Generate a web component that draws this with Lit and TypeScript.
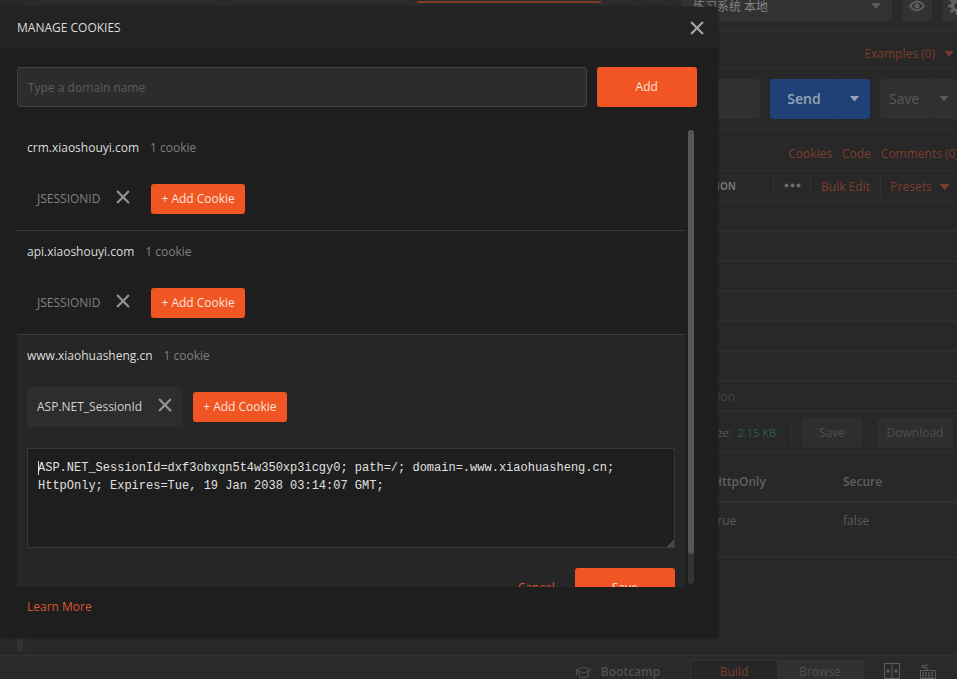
import { LitElement, html, css, svg, nothing } from "lit";
import { customElement, property, state } from "lit/decorators.js";
import { classMap } from "lit/directives/class-map.js";

interface CookieDomain {
  domain: string;
  cookies: string[];
  value?: string;
}

const DOMAINS: CookieDomain[] = [
  { domain: "crm.xiaoshouyi.com", cookies: ["JSESSIONID"] },
  { domain: "api.xiaoshouyi.com", cookies: ["JSESSIONID"] },
  {
    domain: "www.xiaohuasheng.cn",
    cookies: ["ASP.NET_SessionId"],
    value:
      "ASP.NET_SessionId=dxf3obxgn5t4w350xp3icgy0; path=/; domain=.www.xiaohuasheng.cn; HttpOnly; Expires=Tue, 19 Jan 2038 03:14:07 GMT;",
  },
];

const controls = css`
  * {
    box-sizing: border-box;
  }
  button,
  input,
  select,
  textarea {
    margin: 0;
    padding: 0;
    border: 0;
    background: none;
    color: inherit;
    font: inherit;
    outline: none;
  }
  a {
    text-decoration: none;
  }
  svg {
    display: block;
  }
`;

const cross = svg`<path d="M1 1 L12 12 M12 1 L1 12" fill="none" stroke="currentColor" stroke-width="2"/>`;

@customElement("cookie-manager")
export class CookieManager extends LitElement {
  @property({ attribute: false }) domains: CookieDomain[] = [];

  static styles = [
    controls,
    css`
      :host {
        display: flex;
        flex-direction: column;
        overflow: hidden;
        border-radius: 4px;
        background: #1e1e1e;
        color: #dcdcdc;
      }
      .header {
        flex: none;
        display: flex;
        align-items: center;
        justify-content: space-between;
        height: 40px;
        padding: 1px 14px 0 17px;
        background: #232323;
      }
      h1 {
        margin: 0;
        font-size: 12px;
        font-weight: 400;
      }
      .close {
        color: #a8a8a8;
      }
      .form {
        flex: none;
        display: flex;
        gap: 10px;
        padding: 20px 21px 20px 17px;
      }
      .domain-input {
        flex: 1;
        min-width: 0;
        height: 40px;
        padding: 0 10px;
        border: 1px solid #414141;
        border-radius: 3px;
        background: #2c2c2c;
      }
      .domain-input::placeholder {
        color: #5c5c5c;
        opacity: 1;
      }
      .primary {
        height: 40px;
        width: 100px;
        border-radius: 3px;
        background: #f15524;
        color: #fbe3d6;
      }
      .body {
        flex: 1;
        min-height: 0;
        display: flex;
        gap: 3px;
        padding: 0 24px 0 17px;
      }
      .list {
        flex: 1;
        min-width: 0;
        margin: 0;
        padding: 0;
        overflow: hidden;
        list-style: none;
      }
      .item {
        display: flex;
        flex-direction: column;
        gap: 20px;
        padding: 10px;
        border-bottom: 1px solid #3a3a3a;
      }
      .item.open {
        background: #262626;
      }
      .title {
        display: flex;
        align-items: center;
        gap: 11px;
        height: 22px;
      }
      h2 {
        margin: 0;
        font-size: 12px;
        font-weight: 400;
      }
      .count {
        color: #808080;
      }
      .cookies {
        display: flex;
        align-items: center;
        gap: 10px;
        padding-bottom: 1px;
      }
      .chip {
        display: flex;
        align-items: center;
        gap: 16px;
        height: 40px;
        padding: 0 11px 0 10px;
        border-radius: 3px;
        color: #808080;
      }
      .open .chip {
        background: #2d2d2d;
        color: #d0d0d0;
      }
      .remove {
        padding-bottom: 4px;
        color: #949494;
      }
      .add-cookie {
        height: 30px;
        padding: 0 10px;
        border-radius: 3px;
        background: #f15524;
        color: #fbe3d6;
      }
      .editor {
        position: relative;
        display: flex;
      }
      .value {
        flex: 1;
        height: 100px;
        padding: 10px;
        border: 1px solid #383838;
        background: #1e1e1e;
        color: #e0e0e0;
        font: 12px/18px "Liberation Mono", monospace;
      }
      .value::-webkit-resizer {
        background: linear-gradient(135deg, transparent 75%, #484848 75%);
      }
      .caret {
        position: absolute;
        top: 13px;
        left: 11px;
        width: 1px;
        height: 14px;
        background: #e0e0e0;
      }
      .actions {
        display: flex;
        align-items: center;
        justify-content: flex-end;
        gap: 20px;
      }
      .link {
        color: #d9532e;
      }
      .track {
        width: 6px;
        margin: 3px 0;
        border-radius: 3px;
        background: #343434;
      }
      .thumb {
        width: 6px;
        height: 93.4%;
        border-radius: 3px;
        background: #565656;
      }
      .footer {
        flex: none;
        height: 51px;
        padding: 11px 27px;
      }
    `,
  ];

  private renderItem(d: CookieDomain) {
    return html`<li class=${classMap({ item: true, open: !!d.value })}>
      <div class="title">
        <h2>${d.domain}</h2>
        <span class="count">${d.cookies.length} cookie</span>
      </div>
      <div class="cookies">
        ${d.cookies.map(
          (name) => html`<div class="chip">
            <button>${name}</button>
            <button class="remove" aria-label="Remove ${name}">
              <svg width="14" height="14" viewBox="0 0 13 13">${cross}</svg>
            </button>
          </div>`
        )}
        <button class="add-cookie">+ Add Cookie</button>
      </div>
      ${d.value
        ? html`<div class="editor">
              <textarea class="value" aria-label="Cookie value" spellcheck="false" .value=${d.value}></textarea>
              <span class="caret"></span>
            </div>
            <div class="actions">
              <button class="link">Cancel</button>
              <button class="primary">Save</button>
            </div>`
        : nothing}
    </li>`;
  }

  render() {
    return html`
      <header class="header">
        <h1>MANAGE COOKIES</h1>
        <button class="close" aria-label="Close">
          <svg width="14" height="14" viewBox="0 0 13 13">${cross}</svg>
        </button>
      </header>
      <div class="form">
        <input class="domain-input" type="text" aria-label="Domain name" placeholder="Type a domain name" />
        <button class="primary">Add</button>
      </div>
      <div class="body">
        <ul class="list">
          ${this.domains.map((d) => this.renderItem(d))}
        </ul>
        <div class="track"><div class="thumb"></div></div>
      </div>
      <footer class="footer"><a class="link" href="#learn">Learn More</a></footer>
    `;
  }
}

@customElement("app-root")
export class AppRoot extends LitElement {
  @state() private domains = DOMAINS;

  static styles = [
    controls,
    css`
      :host {
        position: relative;
        display: flex;
        flex-direction: column;
        height: 100vh;
        overflow: hidden;
        background: #282828;
        color: #5a5a5a;
        font: 12px/18px "Open Sans", "Noto Sans CJK SC", sans-serif;
      }
      .modal {
        position: absolute;
        top: 7px;
        bottom: 41px;
        left: 0;
        width: 75%;
        box-shadow: 0 0 3px #202020;
      }
      .shell {
        flex: 1;
        min-height: 0;
        display: flex;
      }
      .sidebar {
        flex: none;
        display: flex;
        align-items: flex-end;
        justify-content: flex-end;
        width: 27px;
        padding: 0 3px 4px 0;
        border-right: 1px solid #2f2f2f;
      }
      .nub {
        width: 6px;
        height: 60px;
        border-radius: 3px;
        background: #333333;
      }
      /* The workspace runs on past the right edge of the window. */
      .workspace {
        flex: 1;
        min-width: 0;
        margin-right: -30px;
        display: flex;
        flex-direction: column;
      }
      .row {
        flex: none;
        display: flex;
        align-items: center;
        justify-content: flex-end;
        border-bottom: 1px solid #303030;
      }
      .topbar {
        height: 32px;
        align-items: flex-end;
        gap: 10px;
        padding: 0 15px 10px 9px;
        background: #2a2a2a;
      }
      .tabs {
        flex: 1;
        align-self: flex-start;
        display: flex;
        gap: 4px;
        padding-top: 1px;
      }
      .tab {
        width: 186px;
        height: 20px;
        border: 1px solid #303030;
        border-bottom: 0;
        border-radius: 3px 3px 0 0;
      }
      .tab.active {
        border-top: 2px solid #7d3c2c;
      }
      .tab.small {
        width: 30px;
      }
      .picker {
        display: flex;
        align-items: center;
        height: 30px;
        width: 210px;
        padding-right: 11px;
        border-radius: 3px;
        background: #323232;
      }
      .picker select {
        flex: 1;
        height: 30px;
        padding: 2px 0 0 11px;
        appearance: none;
        color: #858585;
      }
      .square {
        display: flex;
        align-items: center;
        justify-content: center;
        width: 30px;
        height: 30px;
        border-radius: 3px;
        background: #323232;
        color: #606060;
      }
      .accent {
        color: #7d3e2e;
      }
      .caret {
        width: 10px;
        height: 6px;
        background: currentColor;
        clip-path: polygon(0 0, 100% 0, 50% 100%);
      }
      .examples {
        height: 37px;
        gap: 9px;
        padding: 7px 33px 0 0;
      }
      .request {
        height: 61px;
        gap: 10px;
        padding: 0 7px 1px 0;
        font-size: 14px;
      }
      .url {
        flex: 1;
        height: 40px;
        min-width: 0;
        border-radius: 3px;
        background: #303030;
      }
      .split {
        display: flex;
        height: 40px;
        border-radius: 3px;
        background: #303030;
      }
      .split .label {
        width: 53px;
        padding: 1px 0 0 9px;
        text-align: left;
      }
      .split .more {
        display: flex;
        align-items: center;
        padding-left: 5px;
        width: 47px;
        border-left: 1px solid #2b2b2b;
      }
      .split.send {
        background: #1e4276;
        color: #98a4b4;
        font-weight: 600;
      }
      .send .label {
        width: 68px;
        padding: 1px 0 0;
        text-align: center;
      }
      .send .more {
        width: 32px;
        padding: 0;
        justify-content: center;
        border-color: #1c3c6b;
      }
      .links {
        height: 41px;
        gap: 10px;
        padding: 7px 28px 0 0;
      }
      .columns {
        height: 31px;
        font-weight: 600;
      }
      .columns .name {
        padding-right: 37px;
        color: #747474;
        font-size: 10px;
        font-weight: 700;
      }
      .cell {
        display: flex;
        align-items: center;
        justify-content: center;
        gap: 8px;
        height: 24px;
        padding-top: 2px;
        border-left: 1px solid #313131;
        font-weight: 400;
      }
      .dots {
        width: 37px;
        padding: 0 0 2px;
      }
      .bulk {
        width: 70px;
      }
      .presets {
        width: 107px;
        padding-right: 28px;
      }
      .line {
        height: 30px;
        border-width: 2px;
        border-color: #2f2f2f;
      }
      .ghost {
        margin: 2px 252px 0 0;
        color: #464646;
      }
      .response {
        height: 41px;
        padding: 1px 34px 0 0;
      }
      .size {
        padding: 3px 15px 3px 0;
        border-right: 1px solid #303030;
        font-size: 11px;
      }
      .kb {
        margin-left: 3px;
        color: #2c5e4c;
      }
      .plain {
        height: 30px;
        width: 60px;
        margin-left: 10px;
        border-radius: 3px;
        background: #2e2e2e;
        color: #505050;
      }
      .plain.wide {
        width: 76px;
        margin-left: 15px;
      }
      .results {
        width: 100%;
        border-collapse: collapse;
        table-layout: fixed;
        text-align: left;
      }
      .results .first {
        width: 686px;
      }
      .results .second {
        width: 130px;
      }
      .results th {
        height: 49px;
        padding: 10px 0 0;
        border-bottom: 2px solid #303030;
        color: #606060;
        font-weight: 600;
      }
      .results td {
        height: 55px;
        padding: 0 0 18px;
        border-bottom: 2px solid #2f2f2f;
      }
      .status {
        flex: none;
        display: flex;
        align-items: flex-start;
        justify-content: flex-end;
        height: 24px;
        padding-top: 4px;
        border-top: 1px solid #323232;
        background: #2a2a2a;
      }
      .bootcamp {
        display: flex;
        align-items: center;
        gap: 9px;
        height: 24px;
        margin-right: 30px;
        font-weight: 600;
        color: #525252;
      }
      .segments {
        display: flex;
        margin-right: 20px;
        border: 1px solid #333333;
        border-bottom: 0;
      }
      .segment {
        width: 86px;
        height: 22px;
        background: #313131;
        color: #505050;
      }
      .segment.on {
        background: #262626;
        color: #7d3e2e;
      }
      .tool {
        padding-top: 3px;
        margin-right: 20px;
        color: #5c5c5c;
      }
      .tool.last {
        margin-right: 21px;
      }
    `,
  ];

  render() {
    return html`
      <div class="shell">
        <div class="sidebar"><div class="nub"></div></div>
        <main class="workspace">
          <div class="row topbar">
            <div class="tabs">
              <div class="tab"></div>
              <div class="tab"></div>
              <div class="tab active"></div>
              <div class="tab small"></div>
              <div class="tab small"></div>
            </div>
            <div class="picker">
              <select aria-label="Environment"><option>练习系统 本地</option></select>
              <span class="caret"></span>
            </div>
            <button class="square" aria-label="Preview">
              <svg width="16" height="12" viewBox="0 0 16 12">
                <path d="M1 6 Q8 -3 15 6 Q8 15 1 6Z" fill="none" stroke="currentColor" stroke-width="2" />
                <circle cx="8" cy="6" r="2.5" fill="currentColor" />
              </svg>
            </button>
            <button class="square" aria-label="Settings">
              <svg width="18" height="18" viewBox="0 0 18 18">
                <circle cx="9" cy="9" r="4.5" fill="none" stroke="currentColor" stroke-width="3.5" />
                <path
                  d="M9 0V4M9 14V18M0 9H4M14 9H18M2.6 2.6L5.5 5.5M12.5 12.5L15.4 15.4M15.4 2.6L12.5 5.5M5.5 12.5L2.6 15.4"
                  stroke="currentColor"
                  stroke-width="3"
                />
              </svg>
            </button>
          </div>
          <div class="row examples accent">
            <a class="accent" href="#examples">Examples (0)</a><span class="caret"></span>
          </div>
          <div class="row request">
            <input class="url" type="text" aria-label="Request URL" />
            <div class="split send">
              <button class="label">Send</button>
              <button class="more" aria-label="Send options"><span class="caret"></span></button>
            </div>
            <div class="split">
              <button class="label">Save</button>
              <button class="more" aria-label="Save options"><span class="caret"></span></button>
            </div>
          </div>
          <nav class="row links">
            <a class="accent" href="#cookies">Cookies</a>
            <a class="accent" href="#code">Code</a>
            <a class="accent" href="#comments">Comments (0)</a>
          </nav>
          <div class="row columns">
            <span class="name">DESCRIPTION</span>
            <button class="cell dots" aria-label="Columns">
              <svg width="17" height="5" viewBox="0 0 17 5" fill="#6c6c6c">
                <circle cx="2.5" cy="2.5" r="2" />
                <circle cx="8.5" cy="2.5" r="2" />
                <circle cx="14.5" cy="2.5" r="2" />
              </svg>
            </button>
            <button class="cell bulk accent">Bulk Edit</button>
            <button class="cell presets accent">Presets <span class="caret"></span></button>
          </div>
          ${[1, 2, 3, 4, 5, 6].map(() => html`<div class="row line"></div>`)}
          <div class="row line"><span class="ghost">Description</span></div>
          <div class="row response">
            <span class="size">Size: <span class="kb">2.15 KB</span></span>
            <button class="plain">Save</button>
            <button class="plain wide">Download</button>
          </div>
          <table class="results">
            <thead>
              <tr>
                <th class="first"></th>
                <th class="second">HttpOnly</th>
                <th>Secure</th>
              </tr>
            </thead>
            <tbody>
              <tr>
                <td></td>
                <td>true</td>
                <td>false</td>
              </tr>
            </tbody>
          </table>
        </main>
      </div>
      <footer class="status">
        <div class="bootcamp">
          <svg width="17" height="13" viewBox="0 0 17 13" fill="none" stroke="currentColor">
            <path d="M1 4 L8.5 1 L16 4 L8.5 7Z M4 5.5V10.5Q8.5 13 13 10.5V5.5 M1.5 4V9" />
          </svg>
          Bootcamp
        </div>
        <div class="segments">
          <button class="segment on">Build</button>
          <button class="segment">Browse</button>
        </div>
        <button class="tool" aria-label="Panes">
          <svg width="16" height="16" viewBox="0 0 16 16" fill="none" stroke="currentColor">
            <path d="M.5 .5H15.5V15.5H.5Z M8 .5V15.5" />
            <path d="M2.5 8H5.5M10.5 8H13.5" stroke-width="3" />
          </svg>
        </button>
        <button class="tool last" aria-label="Keyboard shortcuts">
          <svg width="16" height="16" viewBox="0 0 16 16" fill="none" stroke="currentColor">
            <path d="M.5 7.5H15.5V15.5H.5Z M7 7V4.5H2V2.5H7V.5" />
            <path d="M2 10H14M2 12.5H14M2 15H14" stroke-dasharray="2 1" stroke-width="1.5" />
          </svg>
        </button>
      </footer>
      <cookie-manager class="modal" role="dialog" aria-label="Manage cookies" .domains=${this.domains}></cookie-manager>
    `;
  }
}
